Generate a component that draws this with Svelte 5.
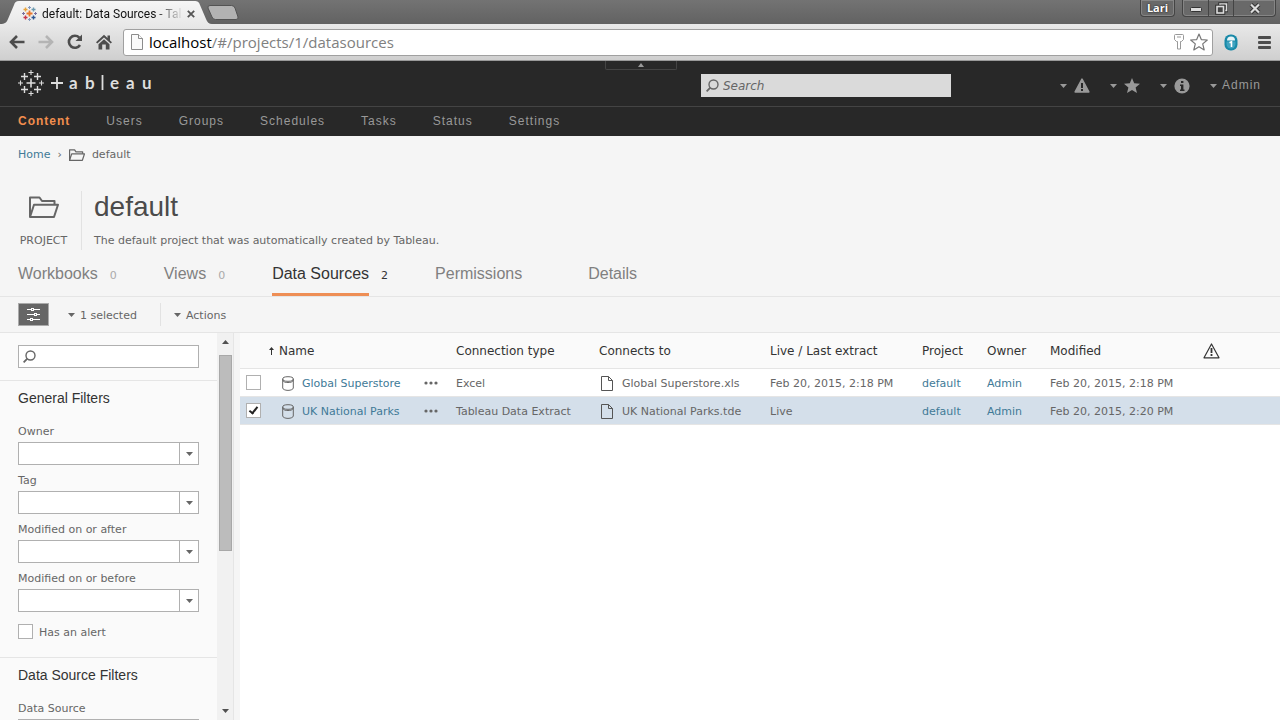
<script lang="ts">
  type Source = {
    name: string;
    type: string;
    file: string;
    extract: string;
    project: string;
    owner: string;
    modified: string;
    selected: boolean;
  };

  const navItems = ["Content", "Users", "Groups", "Schedules", "Tasks", "Status", "Settings"];

  const tabs = [
    { label: "Workbooks", count: "0" },
    { label: "Views", count: "0" },
    { label: "Data Sources", count: "2" },
    { label: "Permissions", count: "" },
    { label: "Details", count: "" },
  ];
  let activeTab = $state("Data Sources");

  const filters = [
    { id: "owner", label: "Owner" },
    { id: "tag", label: "Tag" },
    { id: "after", label: "Modified on or after" },
    { id: "before", label: "Modified on or before" },
  ];

  let sources: Source[] = $state([
    {
      name: "Global Superstore",
      type: "Excel",
      file: "Global Superstore.xls",
      extract: "Feb 20, 2015, 2:18 PM",
      project: "default",
      owner: "Admin",
      modified: "Feb 20, 2015, 2:18 PM",
      selected: false,
    },
    {
      name: "UK National Parks",
      type: "Tableau Data Extract",
      file: "UK National Parks.tde",
      extract: "Live",
      project: "default",
      owner: "Admin",
      modified: "Feb 20, 2015, 2:20 PM",
      selected: true,
    },
  ]);

  const selectedCount = $derived(sources.filter((s) => s.selected).length);
</script>

{#snippet caret()}
  <svg class="caret" width="7" height="4" viewBox="0 0 7 4"><path d="M0 0h7L3.5 4z" fill="currentColor" /></svg>
{/snippet}

{#snippet folder(w: number, h: number, sw: number)}
  <svg width={w} height={h} viewBox="0 0 30 22" fill="none" stroke="#666" stroke-width={sw} stroke-linejoin="round">
    <path d="M1 21V1.500H10.500L13 5H25.500V8.500" />
    <path d="M1 21L5 8.800H29L25 21Z" />
  </svg>
{/snippet}

{#snippet magnifier()}
  <svg class="magnifier" width="13" height="13" viewBox="0 0 13 13" fill="none" stroke="#666" stroke-width="1.400">
    <circle cx="7.500" cy="5.500" r="4.500" />
    <path d="M4.300 8.700L.6 12.400" stroke-width="1.800" />
  </svg>
{/snippet}

{#snippet filterSelect(id: string, label: string)}
  <div class="field">
    <label for="filter-{id}">{label}</label>
    <div class="select-box">
      <select id="filter-{id}"><option value=""></option></select>
      <span class="select-arrow">{@render caret()}</span>
    </div>
  </div>
{/snippet}

<div class="window">
  <div class="titlebar">
    <div class="tab-strip">
      <div class="browser-tab">
        <svg class="tab-shape" width="212" height="24" viewBox="0 0 212 24">
          <defs>
            <linearGradient id="tabfill" x1="0" y1="0" x2="0" y2="1">
              <stop offset="0" stop-color="#f6f6f6" />
              <stop offset="1" stop-color="#e9e9e9" />
            </linearGradient>
          </defs>
          <path d="M0 24C5 24 7 22 8 19L14 5C15 2 16 1 19 1H194C198 1 199 2 200 5L206 19C207 22 209 24 212 24Z" fill="url(#tabfill)" />
        </svg>
        <svg class="favicon" width="15" height="15" viewBox="0 0 15 15" fill="none" stroke-width="1.400">
          <path d="M7.500 4.500v6M4.500 7.500h6" stroke="#e8762b" stroke-width="1.800" />
          <path d="M3.500 1.500v4M1.500 3.500h4" stroke="#e9a33a" />
          <path d="M11.500 1.500v4M9.500 3.500h4" stroke="#6b9ab0" />
          <path d="M3.500 9.500v4M1.500 11.500h4" stroke="#c8364b" />
          <path d="M11.500 9.500v4M9.500 11.500h4" stroke="#2d5592" />
          <path d="M7.500 0v3M6 1.500h3M7.500 12v3M6 13.500h3" stroke="#8498bd" stroke-width="1" />
          <path d="M1.500 6v3M0 7.500h3M13.500 6v3M12 7.500h3" stroke="#7a6f9e" stroke-width="1" />
        </svg>
        <span class="tab-title">default: Data Sources - Tal</span>
        <button class="tab-close" aria-label="Close tab">
          <svg width="8" height="8" viewBox="0 0 8 8"><path d="M.8.8l6.400 6.400M7.200.8L.8 7.200" stroke="#555" stroke-width="1.800" /></svg>
        </button>
      </div>
      <button class="new-tab" aria-label="New tab">
        <svg width="32" height="16" viewBox="0 0 32 16"><path d="M3 .5H24.500Q27 .5 28 3L31 12Q31.500 14.500 29 14.500H8.500Q6 14.500 5 12L1 3Q.5.5 3 .5Z" fill="#b2b2b2" stroke="#535353" /></svg>
      </button>
    </div>
    <div class="window-controls">
      <button class="profile">Lari</button>
      <div class="control-group">
        <button aria-label="Minimize">
          <svg width="12" height="12" viewBox="0 0 12 12"><rect x=".5" y="5.500" width="11" height="4" rx="1" fill="#ddd" stroke="#333" /></svg>
        </button>
        <button aria-label="Restore">
          <svg width="13" height="13" viewBox="0 0 13 13" fill="none">
            <path d="M5 3.500V2h6.500v6.500H10" stroke="#333" stroke-width="3.600" />
            <path d="M5 3.500V2h6.500v6.500H10" stroke="#ddd" stroke-width="1.600" />
            <rect x="2" y="4.500" width="6.500" height="6.500" stroke="#333" stroke-width="3.600" />
            <rect x="2" y="4.500" width="6.500" height="6.500" fill="#444" stroke="#ddd" stroke-width="1.600" />
          </svg>
        </button>
        <button class="wide" aria-label="Close">
          <svg width="12" height="11" viewBox="0 0 12 11"><path d="M2 1.500l8 8M10 1.500l-8 8" stroke="#333" stroke-width="4" /><path d="M2 1.500l8 8M10 1.500l-8 8" stroke="#ddd" stroke-width="2.200" /></svg>
        </button>
      </div>
    </div>
  </div>

  <div class="toolbar">
    <button aria-label="Back">
      <svg width="16" height="14" viewBox="0 0 16 14" fill="none" stroke="#4d4d4d" stroke-width="2.600"><path d="M15.500 7H2M8 1L2 7l6 6" /></svg>
    </button>
    <button aria-label="Forward">
      <svg width="16" height="14" viewBox="0 0 16 14" fill="none" stroke="#b4b4b4" stroke-width="2.600"><path d="M.5 7H14M8 1l6 6-6 6" /></svg>
    </button>
    <button aria-label="Reload">
      <svg width="16" height="16" viewBox="0 0 16 16"><path d="M13 11A6 6 0 1 1 12.300 3.700" fill="none" stroke="#4d4d4d" stroke-width="2.600" /><path d="M15 .5V7H8.500Z" fill="#4d4d4d" /></svg>
    </button>
    <button aria-label="Home">
      <svg width="16" height="16" viewBox="0 0 16 16" fill="#4d4d4d"><path d="M8 .8L0 8.300l1.300 1.300L8 3.500l6.700 6.100L16 8.300 14 6.400V1.500h-2.500v2.600Z" /><path d="M2.500 10.200L8 5.200l5.500 5V15.500H9.800V10.500H6.200v5H2.500Z" /></svg>
    </button>
    <div class="omnibox">
      <svg width="12" height="16" viewBox="0 0 12 16" fill="#fafafa" stroke="#8c8c8c"><path d="M.5.5H7.500L11.500 4.500V15.500H.5Z" /><path d="M7.500.5V4.500H11.500" /></svg>
      <span class="url"><b>localhost</b>/#/projects/1/datasources</span>
      <svg class="key" width="10" height="16" viewBox="0 0 10 16" fill="none" stroke="#999"><path d="M1.500.5h7q1 0 1 1v4l-2 2H6.500v7.500h-3V7.500h-1l-2-2v-4q0-1 1-1ZM3 3h4" /></svg>
      <svg width="18" height="18" viewBox="0 0 18 18" fill="#fff" stroke="#777" stroke-width="1.200"><path d="M9 1l2.300 5.600 6 .4-4.600 3.900 1.500 6L9 13.700l-5.200 3.200 1.500-6L.7 7l6-.4Z" stroke-linejoin="round" /></svg>
    </div>
    <button class="ext" aria-label="1Password">
      <svg width="14" height="17" viewBox="0 0 14 17"><rect x=".5" y=".5" width="13" height="16" rx="6" fill="#1889a8" /><path d="M3 6.500Q3 2.500 7 2.500T11 6.500Z" fill="#e6f4f7" /><path d="M2.500 7.500h9v2.500a4.500 4.500 0 0 1-9 0Z" fill="#3fa3c0" /><path d="M5.500 8.800L7.500 7.800V13" fill="none" stroke="#fff" stroke-width="1.600" /></svg>
    </button>
    <button aria-label="Menu">
      <svg width="13" height="13" viewBox="0 0 13 13" fill="#4d4d4d"><rect width="13" height="3" rx="1" /><rect y="5" width="13" height="3" rx="1" /><rect y="10" width="13" height="3" rx="1" /></svg>
    </button>
  </div>

  <header class="app-header">
    <button class="collapse" aria-label="Collapse header">
      <svg width="6" height="4" viewBox="0 0 6 4"><path d="M0 4h6L3 0z" fill="#999" /></svg>
    </button>
    <svg class="logo" width="134" height="28" viewBox="0 0 134 28" fill="none" stroke="#ddd">
      <path d="M13 8.500v9M8.500 13h9" stroke-width="1.600" />
      <path d="M6.500 3v7M3 6.500h7M19.500 3v7M16 6.500h7M6.500 16v7M3 19.500h7M19.500 16v7M16 19.500h7" stroke-width="1.400" />
      <path d="M13 0v5M10.500 2.500h5M13 21v5M10.500 23.500h5M2.500 10.500v5M0 13h5M23.500 10.500v5M21 13h5" stroke-width="1.100" />
      <path d="M39 7v12M33 13h12" stroke-width="1.800" />
      <path d="M84.500 5v15" stroke-width="1.800" />
      <text x="51 67 92 108 124" y="19" fill="#ddd" stroke="none">abeau</text>
    </svg>
    <div class="search">
      {@render magnifier()}
      <input type="search" placeholder="Search" aria-label="Search" />
    </div>
    <div class="header-menus">
      <button aria-label="Alerts">
        {@render caret()}
        <svg width="16" height="15" viewBox="0 0 16 15"><path d="M8 1.200L14.800 14H1.200Z" fill="#999" stroke="#999" stroke-width="1.600" stroke-linejoin="round" /><path d="M8 5v5M8 11v2" stroke="#282828" stroke-width="2" /></svg>
      </button>
      <button aria-label="Favorites">
        {@render caret()}
        <svg width="16" height="15" viewBox="0 0 16 15"><path d="M8 0l2.200 5.300 5.800.4-4.400 3.700L13 15l-5-3.100L3 15l1.400-5.600L0 5.700l5.800-.4Z" fill="#999" /></svg>
      </button>
      <button aria-label="Help">
        {@render caret()}
        <svg width="16" height="16" viewBox="0 0 16 16"><circle cx="8" cy="8" r="7.600" fill="#999" /><path d="M7 3h2.400v2H7zM6 6.500h3.400v5H10.500V13H6V11.500H7V8H6z" fill="#282828" /></svg>
      </button>
      <button class="user">{@render caret()}<span>Admin</span></button>
    </div>
  </header>

  <nav class="main-nav">
    {#each navItems as item}
      <a href="#/{item.toLowerCase()}" class:active={item === "Content"}>{item}</a>
    {/each}
  </nav>

  <section class="project">
    <div class="breadcrumb">
      <a href="#/projects">Home</a>
      <span class="sep">›</span>
      {@render folder(16, 12, 2.4)}
      <span>default</span>
    </div>
    <div class="project-title">
      <div class="project-kind">
        {@render folder(30, 22, 2)}
        <span>PROJECT</span>
      </div>
      <div class="project-info">
        <h1>default</h1>
        <p>The default project that was automatically created by Tableau.</p>
      </div>
    </div>
    <div class="tabs" role="tablist">
      {#each tabs as tab}
        <button role="tab" aria-selected={activeTab === tab.label} class:active={activeTab === tab.label} onclick={() => (activeTab = tab.label)}>
          <span class="tab-label">{tab.label}</span>
          <span class="tab-count">{tab.count}</span>
        </button>
      {/each}
    </div>
  </section>

  <div class="action-bar">
    <button class="filter-toggle" aria-label="Toggle filters">
      <svg width="15" height="13" viewBox="0 0 15 13" stroke="#fff" fill="#666"><path d="M1 1.500h13M1 6.500h13M1 11.500h13" /><rect x="5.500" y=".5" width="2" height="2" /><rect x="8.500" y="5.500" width="2" height="2" /><rect x="4.500" y="10.500" width="2" height="2" /></svg>
    </button>
    <button class="menu selected-menu">{@render caret()}<span>{selectedCount} selected</span></button>
    <button class="menu">{@render caret()}<span>Actions</span></button>
  </div>

  <main>
    <aside>
      <div class="filters">
        <div class="filter-search">
          {@render magnifier()}
          <input type="text" aria-label="Search data sources" />
        </div>
        <section class="filter-group">
          <h2>General Filters</h2>
          {#each filters as f}
            {@render filterSelect(f.id, f.label)}
          {/each}
          <label class="alert-check"><input type="checkbox" /><span>Has an alert</span></label>
        </section>
        <section class="filter-group">
          <h2>Data Source Filters</h2>
          {@render filterSelect("source", "Data Source")}
        </section>
      </div>
      <div class="scrollbar">
        <svg width="7" height="4" viewBox="0 0 7 4"><path d="M0 4h7L3.500 0z" fill="#505050" /></svg>
        <div class="track"><div class="thumb"></div></div>
        <svg width="7" height="4" viewBox="0 0 7 4"><path d="M0 0h7L3.500 4z" fill="#505050" /></svg>
      </div>
    </aside>

    <div class="grid">
      <table>
        <colgroup>
          <col class="c-check" />
          <col class="c-name" />
          <col class="c-type" />
          <col class="c-file" />
          <col class="c-extract" />
          <col class="c-project" />
          <col class="c-owner" />
          <col class="c-modified" />
          <col />
        </colgroup>
        <thead>
          <tr>
            <th></th>
            <th>
              <div class="sorted">
                <svg width="5" height="8" viewBox="0 0 5 8"><path d="M2.500 0L5 3H0zM2 2h1v6H2z" fill="#333" /></svg>
                Name
              </div>
            </th>
            <th>Connection type</th>
            <th>Connects to</th>
            <th>Live / Last extract</th>
            <th>Project</th>
            <th>Owner</th>
            <th>Modified</th>
            <th>
              <svg width="17" height="16" viewBox="0 0 17 16" fill="none" stroke="#333"><path d="M8.500 1L16 14.800H1Z" stroke-width="1.200" stroke-linejoin="round" /><path d="M8.500 5v5M8.500 11v2" stroke-width="1.800" /></svg>
            </th>
          </tr>
        </thead>
        <tbody>
          {#each sources as s}
            <tr class:selected={s.selected}>
              <td class="check"><input type="checkbox" bind:checked={s.selected} aria-label="Select {s.name}" /></td>
              <td>
                <div class="name-cell">
                  <svg width="12" height="15" viewBox="0 0 12 15" fill="none" stroke="#666"><ellipse cx="6" cy="3" rx="5.300" ry="2.300" /><path d="M.7 3v9c0 1.200 2.400 2.400 5.300 2.400s5.300-1.200 5.300-2.400V3M.7 4.500C1.500 6 3.500 6.500 6 6.500s4.500-.5 5.300-2" /></svg>
                  <a href="#/datasources">{s.name}</a>
                  <button class="more" aria-label="Actions for {s.name}">
                    <svg width="14" height="4" viewBox="0 0 14 4" fill="#666"><circle cx="2" cy="2" r="1.600" /><circle cx="7" cy="2" r="1.600" /><circle cx="12" cy="2" r="1.600" /></svg>
                  </button>
                </div>
              </td>
              <td>{s.type}</td>
              <td>
                <div class="file-cell">
                  <svg width="12" height="15" viewBox="0 0 12 15" fill="none" stroke="#555"><path d="M.5.5H7.500L11.500 4.500V14.500H.5Z" /><path d="M7.500.5V4.500H11.500" /></svg>
                  {s.file}
                </div>
              </td>
              <td>{s.extract}</td>
              <td><a href="#/projects/1">{s.project}</a></td>
              <td><a href="#/users">{s.owner}</a></td>
              <td>{s.modified}</td>
              <td></td>
            </tr>
          {/each}
        </tbody>
      </table>
    </div>
  </main>
</div>

<style>
  :global(body) {
    margin: 0;
  }
  .window {
    display: flex;
    flex-direction: column;
    height: 100vh;
    overflow: hidden;
    background: #f5f5f5;
    color: #666;
    font-family: Verdana, "DejaVu Sans", sans-serif;
    font-size: 11px;
    line-height: 18px;
  }
  .window *,
  .window *::before {
    box-sizing: border-box;
  }
  svg {
    display: block;
    flex-shrink: 0;
  }
  button {
    border: 0;
    padding: 0;
    margin: 0;
    background: none;
    font: inherit;
    color: inherit;
    display: flex;
    align-items: center;
    justify-content: center;
  }
  a {
    color: #417a97;
    text-decoration: none;
  }
  h1,
  h2,
  p {
    margin: 0;
    font-weight: 400;
  }

  /* browser frame */
  .titlebar {
    display: flex;
    justify-content: space-between;
    height: 24px;
    padding: 0 4px 0 5px;
    background: linear-gradient(#737373, #626262);
    flex-shrink: 0;
  }
  .tab-strip {
    display: flex;
  }
  .browser-tab {
    position: relative;
    display: flex;
    align-items: center;
    width: 202px;
    padding: 3px 12px 0 17px;
  }
  .tab-shape {
    position: absolute;
    left: -5px;
    top: 0;
  }
  .favicon {
    position: relative;
  }
  .tab-title {
    position: relative;
    flex: 1;
    margin-left: 5px;
    white-space: nowrap;
    color: #111;
    font-family: "Segoe UI", Roboto, sans-serif;
    font-size: 12px;
    mask-image: linear-gradient(90deg, #000 112px, transparent 142px);
  }
  .tab-close {
    position: relative;
  }
  .new-tab {
    margin: 2px 0 0;
  }
  .window-controls {
    display: flex;
    gap: 7px;
    height: 17px;
  }
  .profile,
  .control-group {
    border: 1px solid #444;
    border-top: 0;
    border-radius: 0 0 4px 4px;
    background: #696969;
    box-shadow: inset 0 0 0 1px #858585;
  }
  .profile {
    width: 35px;
    color: #fff;
    font-family: "Open Sans", sans-serif;
    font-size: 11px;
    font-weight: 700;
    line-height: 14px;
    text-shadow: 0 0 2px #000;
  }
  .control-group {
    display: flex;
  }
  .control-group button {
    width: 25px;
  }
  .control-group button + button {
    border-left: 1px solid #444;
  }
  .control-group .wide {
    width: 42px;
  }
  .toolbar {
    display: flex;
    align-items: center;
    gap: 13px;
    height: 37px;
    padding: 0 9px;
    background: linear-gradient(#e9e9e9, #cfcfcf);
    border-bottom: 1px solid #9a9a9a;
    flex-shrink: 0;
  }
  .omnibox {
    display: flex;
    flex: 1;
    align-items: center;
    gap: 6px;
    height: 27px;
    margin-left: -2px;
    padding: 0 4px 0 7px;
    background: #fff;
    border: 1px solid #a0a0a0;
    border-radius: 3px;
  }
  .url {
    flex: 1;
    color: #808080;
    font-family: "Segoe UI", "Open Sans", sans-serif;
    font-size: 15px;
    white-space: nowrap;
  }
  .url b {
    color: #000;
    font-weight: 400;
  }
  .ext {
    margin: 0 7px 0 -2px;
  }

  /* server header */
  .app-header {
    position: relative;
    display: flex;
    align-items: center;
    height: 46px;
    padding: 0 19px 0 18px;
    background: #282828;
    border-bottom: 1px solid #444;
    flex-shrink: 0;
  }
  .logo text {
    font-family: Lato, sans-serif;
    font-size: 17px;
    font-weight: 700;
  }
  .collapse {
    position: absolute;
    top: 0;
    left: 50%;
    width: 72px;
    height: 9px;
    margin-left: -35px;
    border: 1px solid #444;
    border-top: 0;
    border-radius: 0 0 2px 2px;
  }
  .search {
    display: flex;
    align-items: center;
    gap: 4px;
    width: 250px;
    height: 23px;
    margin: 4px 109px 0 auto;
    padding: 0 5px;
    background: #dadada;
  }
  .search input {
    flex: 1;
    min-width: 0;
    border: 0;
    padding: 0;
    background: none;
    outline: none;
    font: inherit;
    font-size: 12px;
  }
  .search input::placeholder {
    color: #666;
    font-style: italic;
  }
  .header-menus {
    display: flex;
    gap: 20px;
    margin-top: 4px;
    color: #999;
  }
  .header-menus button {
    gap: 7px;
  }
  .header-menus .user {
    gap: 5px;
  }
  .user span {
    padding-bottom: 2px;
  }
  .user,
  .main-nav {
    font-family: Arial, "Liberation Sans", sans-serif;
    font-size: 12px;
    letter-spacing: 1px;
  }
  .main-nav {
    display: flex;
    align-items: center;
    gap: 36px;
    height: 29px;
    padding: 0 18px 2px;
    background: #282828;
    flex-shrink: 0;
  }
  .main-nav a {
    color: #999;
  }
  .main-nav a.active {
    color: #f28e4e;
    font-weight: 700;
  }

  /* project heading */
  .project {
    padding: 10px 18px 0;
    border-bottom: 1px solid #e5e5e5;
    flex-shrink: 0;
  }
  .breadcrumb {
    display: flex;
    align-items: center;
    gap: 7px;
  }
  .project-title {
    display: flex;
    margin-top: 27px;
  }
  .project-kind {
    display: flex;
    flex-direction: column;
    align-items: center;
    justify-content: space-between;
    width: 64px;
    padding: 5px 12px 0 0;
    border-right: 1px solid #e2e2e2;
  }
  .project-info {
    padding-left: 12px;
  }
  h1 {
    margin-bottom: 9px;
    color: #4b4b4b;
    font-family: Arial, "Liberation Sans", sans-serif;
    font-size: 28px;
    line-height: 32px;
  }
  .tabs {
    display: flex;
    gap: 47px;
  }
  .tabs button {
    gap: 12px;
    align-items: stretch;
  }
  .tab-label {
    padding: 14px 0 9px;
    border-bottom: 3px solid transparent;
    color: #808080;
    font-family: Arial, "Liberation Sans", sans-serif;
    font-size: 16px;
    line-height: 20px;
  }
  .tab-count {
    min-width: 7px;
    padding-top: 17px;
    color: #aaa;
  }
  .active .tab-label {
    border-color: #ee8e55;
    color: #333;
  }
  .active .tab-count {
    color: #333;
  }
  .action-bar {
    display: flex;
    align-items: center;
    height: 36px;
    padding: 0 18px;
    border-bottom: 1px solid #e5e5e5;
    flex-shrink: 0;
  }
  .filter-toggle {
    width: 31px;
    height: 23px;
    background: #666;
    border: 1px solid #aaa;
  }
  .menu {
    gap: 5px;
    height: 23px;
    padding-left: 13px;
  }
  .menu span,
  .alert-check span {
    padding-top: 2px;
  }
  .selected-menu {
    padding: 0 23px 0 19px;
    border-right: 1px solid #e2e2e2;
  }

  /* filters */
  main {
    display: flex;
    flex: 1;
    min-height: 0;
  }
  aside {
    display: flex;
    width: 234px;
    background: #fafafa;
    border-right: 1px solid #e5e5e5;
    flex-shrink: 0;
  }
  .filters {
    flex: 1;
    overflow: hidden;
  }
  .filter-search {
    display: flex;
    align-items: center;
    height: 23px;
    margin: 12px 18px;
    padding-left: 4px;
    background: #fff;
    border: 1px solid #b0b0b0;
  }
  .filter-search input {
    flex: 1;
    min-width: 0;
    border: 0;
    background: none;
    font: inherit;
    outline: none;
  }
  .filter-group {
    padding: 7px 18px 18px;
    border-top: 1px solid #e5e5e5;
  }
  h2 {
    margin-bottom: 14px;
    color: #333;
    font-family: Arial, "Liberation Sans", sans-serif;
    font-size: 14px;
    line-height: 20px;
  }
  .field {
    margin-bottom: 6px;
  }
  .field label {
    display: block;
    line-height: 20px;
  }
  .select-box {
    position: relative;
  }
  .select-box select {
    display: block;
    width: 100%;
    height: 23px;
    appearance: none;
    background: #fff;
    border: 1px solid #b0b0b0;
    border-radius: 0;
    font: inherit;
    color: inherit;
  }
  .select-arrow {
    position: absolute;
    top: 0;
    right: 0;
    bottom: 0;
    display: flex;
    align-items: center;
    justify-content: center;
    width: 20px;
    border-left: 1px solid #b0b0b0;
    pointer-events: none;
  }
  input[type="checkbox"] {
    display: block;
    width: 15px;
    height: 15px;
    margin: 0;
    appearance: none;
    background: #fff;
    border: 1px solid #b0b0b0;
  }
  input[type="checkbox"]:checked::before {
    content: "";
    display: block;
    width: 5px;
    height: 9px;
    margin: 1px 0 0 4px;
    border: solid #222;
    border-width: 0 2px 2px 0;
    transform: rotate(38deg);
  }
  .alert-check {
    display: flex;
    align-items: center;
    gap: 6px;
    height: 15px;
    margin-top: 12px;
  }
  .scrollbar {
    display: flex;
    flex-direction: column;
    align-items: center;
    gap: 11px;
    width: 16px;
    padding: 7px 0;
    background: #f1f1f1;
  }
  .track {
    flex: 1;
    width: 13px;
  }
  .thumb {
    height: 57%;
    background: #bcbcbc;
    border: 1px solid #a8a8a8;
  }

  /* data sources table */
  .grid {
    flex: 1;
    margin-left: 6px;
    background: #fff;
  }
  table {
    width: 100%;
    table-layout: fixed;
    border-collapse: separate;
    border-spacing: 0;
  }
  .c-check { width: 28px; }
  .c-name { width: 188px; }
  .c-type { width: 143px; }
  .c-file { width: 171px; }
  .c-extract { width: 152px; }
  .c-project { width: 65px; }
  .c-owner { width: 63px; }
  .c-modified { width: 153px; }
  th,
  td {
    padding: 0;
    border-bottom: 1px solid #e5e5e5;
    text-align: left;
    white-space: nowrap;
  }
  th {
    height: 36px;
    background: #fafafa;
    color: #333;
    font-size: 12px;
    font-weight: 400;
  }
  td {
    height: 28px;
    padding-top: 2px;
  }
  .selected td {
    background: #d4dfea;
  }
  .check {
    padding: 0 0 0 6px;
  }
  .sorted {
    display: flex;
    align-items: center;
    gap: 5px;
    padding-left: 1px;
  }
  .name-cell {
    display: flex;
    align-items: center;
    gap: 8px;
    padding: 0 18px 0 14px;
  }
  .more {
    margin-left: auto;
    padding-bottom: 2px;
  }
  .file-cell {
    display: flex;
    align-items: center;
    gap: 9px;
    padding-left: 2px;
  }
</style>
